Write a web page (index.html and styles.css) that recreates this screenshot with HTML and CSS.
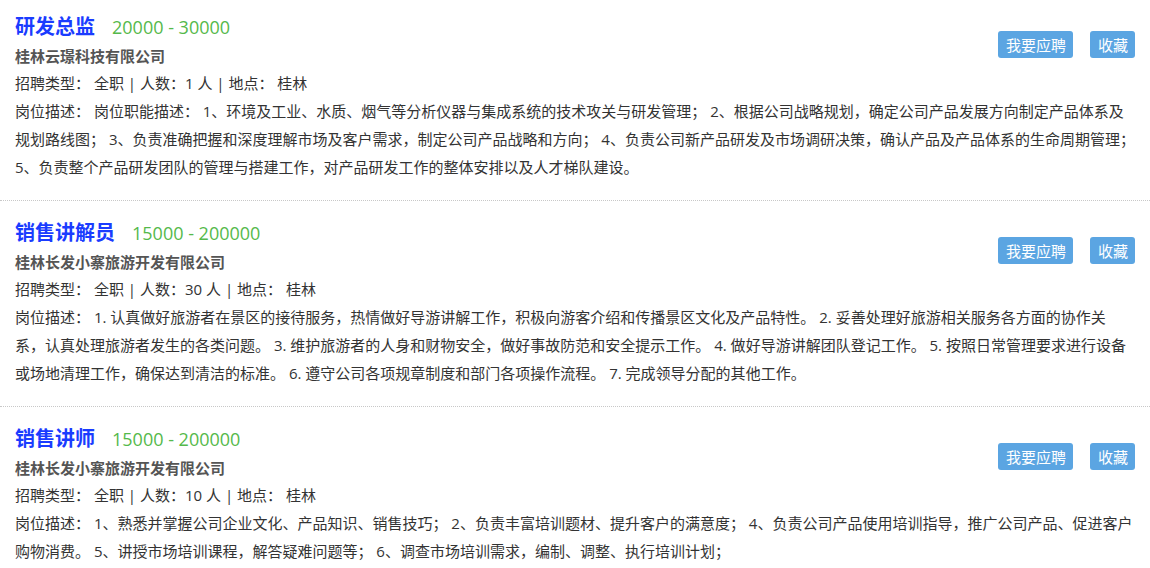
FILE: index.html
```html
<!DOCTYPE html>
<html>
<head>
  <meta charset="utf-8">
  <title>职位列表</title>
  <link rel="stylesheet" href="styles.css">
</head>
<body>
  <div class="joblist">

    <div class="job">
      <div class="head">
        <div class="info">
          <div class="title">研发总监<span class="salary">20000 - 30000</span></div>
          <div class="company">桂林云璟科技有限公司</div>
          <div class="line">招聘类型： 全职 | 人数：1 人 | 地点： 桂林</div>
        </div>
        <div class="actions">
          <button class="btn">我要应聘</button>
          <button class="btn">收藏</button>
        </div>
      </div>
      <div class="desc">岗位描述： 岗位职能描述： 1、环境及工业、水质、烟气等分析仪器与集成系统的技术攻关与研发管理； 2、根据公司战略规划，确定公司产品发展方向制定产品体系及规划路线图； 3、负责准确把握和深度理解市场及客户需求，制定公司产品战略和方向； 4、负责公司新产品研发及市场调研决策，确认产品及产品体系的生命周期管理； 5、负责整个产品研发团队的管理与搭建工作，对产品研发工作的整体安排以及人才梯队建设。</div>
    </div>

    <div class="job">
      <div class="head">
        <div class="info">
          <div class="title">销售讲解员<span class="salary">15000 - 200000</span></div>
          <div class="company">桂林长发小寨旅游开发有限公司</div>
          <div class="line">招聘类型： 全职 | 人数：30 人 | 地点： 桂林</div>
        </div>
        <div class="actions">
          <button class="btn">我要应聘</button>
          <button class="btn">收藏</button>
        </div>
      </div>
      <div class="desc">岗位描述： 1. 认真做好旅游者在景区的接待服务，热情做好导游讲解工作，积极向游客介绍和传播景区文化及产品特性。 2. 妥善处理好旅游相关服务各方面的协作关系，认真处理旅游者发生的各类问题。 3. 维护旅游者的人身和财物安全，做好事故防范和安全提示工作。 4. 做好导游讲解团队登记工作。 5. 按照日常管理要求进行设备或场地清理工作，确保达到清洁的标准。 6. 遵守公司各项规章制度和部门各项操作流程。 7. 完成领导分配的其他工作。</div>
    </div>

    <div class="job">
      <div class="head">
        <div class="info">
          <div class="title">销售讲师<span class="salary">15000 - 200000</span></div>
          <div class="company">桂林长发小寨旅游开发有限公司</div>
          <div class="line">招聘类型： 全职 | 人数：10 人 | 地点： 桂林</div>
        </div>
        <div class="actions">
          <button class="btn">我要应聘</button>
          <button class="btn">收藏</button>
        </div>
      </div>
      <div class="desc">岗位描述： 1、熟悉并掌握公司企业文化、产品知识、销售技巧； 2、负责丰富培训题材、提升客户的满意度； 4、负责公司产品使用培训指导，推广公司产品、促进客户购物消费。 5、讲授市场培训课程，解答疑难问题等； 6、调查市场培训需求，编制、调整、执行培训计划；</div>
    </div>

  </div>
</body>
</html>
```

FILE: styles.css
```css
body {
  margin: 0;
  background: #fff;
  color: #333;
  font-family: "Open Sans", "Noto Sans CJK SC", sans-serif;
  font-size: 15px;
}

.job {
  padding: 16px 15px 19px;
  border-bottom: 1px dotted #c8c8c8;
}

/* top of the list is scrolled a little */
.job:first-child {
  padding-top: 11px;
}

.head {
  display: flex;
  justify-content: space-between;
  align-items: flex-start;
}

.title {
  font-size: 20px;
  font-weight: bold;
  color: #1a3cff;
  line-height: 32px;
}

.salary {
  font-size: 18px;
  font-weight: normal;
  color: #55b94b;
  margin-left: 17px;
}

.company {
  font-size: 15px;
  font-weight: bold;
  color: #555;
  line-height: 26px;
}

.line, .desc {
  line-height: 28px;
}

.actions {
  display: flex;
  gap: 17px;
  margin-top: 20px;
}

.btn {
  height: 27px;
  padding: 0 7px 0 8px;
  border: none;
  border-radius: 3px;
  background: #5ba5e2;
  color: #fff;
  font-family: "Open Sans", "Noto Sans CJK SC", sans-serif;
  font-size: 15px;
  cursor: pointer;
}
```
